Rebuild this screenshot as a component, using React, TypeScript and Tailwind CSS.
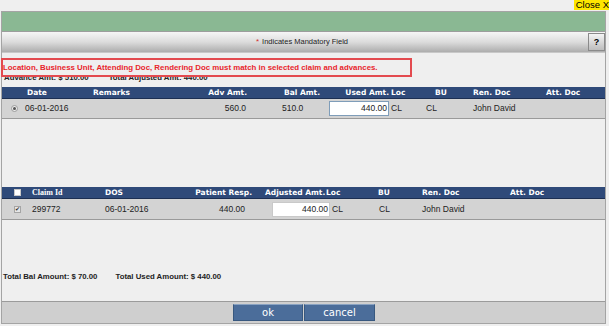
import React from 'react';

const hd = "font-['DejaVu_Sans',Verdana,sans-serif] font-bold text-[7.5px] text-white leading-none";
const td = "font-['Liberation_Sans',Arial,sans-serif] text-[8.5px] text-[#222] leading-none";

const AdvanceTable: React.FC = () => (
  <div className="w-full">
    {/* header */}
    <div className="grid grid-cols-[22px_68px_110px_46px_80px_63px_31px_50px_73px_1fr] items-center h-[12px] bg-[#2f4a79] border-b border-[#1c2f52]">
      <div />
      <div className={`${hd} pl-[3px]`}>Date</div>
      <div className={`${hd} pl-[1px]`}>Remarks</div>
      <div className={`${hd} text-right pr-[1px] whitespace-nowrap`}>Adv Amt.</div>
      <div className={`${hd} pl-[36px] whitespace-nowrap`}>Bal Amt.</div>
      <div className={`${hd} text-right pr-[2px] whitespace-nowrap`}>Used Amt.</div>
      <div className={`${hd}`}>Loc</div>
      <div className={`${hd} pl-[13px]`}>BU</div>
      <div className={`${hd} pl-[1px] whitespace-nowrap`}>Ren. Doc</div>
      <div className={`${hd} pl-[1px] whitespace-nowrap`}>Att. Doc</div>
    </div>
    {/* row */}
    <div className="grid grid-cols-[22px_68px_110px_46px_80px_63px_31px_50px_73px_1fr] items-center h-[20px] bg-[#d3d3d3] border-b border-[#9a9a9a]">
      <div className="flex justify-center pl-[2px]">
        <span className="w-[7px] h-[7px] rounded-full border border-[#9c9c9c] bg-[#ececec] flex items-center justify-center">
          <span className="w-[3px] h-[3px] rounded-full bg-[#555]" />
        </span>
      </div>
      <div className={`${td} pl-[1px]`}>06-01-2016</div>
      <div />
      <div className={`${td} text-right pr-[2px]`}>560.0</div>
      <div className={`${td} pl-[34px]`}>510.0</div>
      <div className="pl-[1px]">
        <div className={`${td} w-[60px] h-[15px] bg-white border border-[#7f9db9] flex items-center justify-end pr-[1px]`}>440.00</div>
      </div>
      <div className={`${td}`}>CL</div>
      <div className={`${td} pl-[4px]`}>CL</div>
      <div className={`${td} pl-[1px]`}>John David</div>
      <div />
    </div>
  </div>
);

const ClaimTable: React.FC = () => (
  <div className="w-full">
    <div className="grid grid-cols-[28px_72px_90px_60px_79px_41px_48px_88px_1fr] items-center h-[12px] bg-[#2f4a79] border-b border-[#1c2f52]">
      <div className="flex justify-center pl-[2px]">
        <span className="w-[7px] h-[7px] bg-white border border-[#c8c8c8]" />
      </div>
      <div className="font-['Liberation_Serif','Times_New_Roman',serif] font-bold text-[8px] text-white leading-none pl-[2px]">Claim Id</div>
      <div className={`${hd} pl-[3px]`}>DOS</div>
      <div className={`${hd} text-right whitespace-nowrap`}>Patient Resp.</div>
      <div className={`${hd} pl-[13px] whitespace-nowrap`}>Adjusted Amt.</div>
      <div className={`${hd} -ml-[5px]`}>Loc</div>
      <div className={`${hd} pl-[6px]`}>BU</div>
      <div className={`${hd} pl-[2px] whitespace-nowrap`}>Ren. Doc</div>
      <div className={`${hd} pl-[2px] whitespace-nowrap`}>Att. Doc</div>
    </div>
    <div className="grid grid-cols-[28px_72px_90px_60px_79px_41px_48px_88px_1fr] items-center h-[21px] bg-[#d3d3d3] border-b border-[#9a9a9a]">
      <div className="flex justify-center pl-[2px]">
        <span className="w-[7px] h-[7px] bg-[#e6e6e6] border border-[#a5a5a5] flex items-center justify-center text-[6px] leading-none text-[#333]">✔</span>
      </div>
      <div className={`${td} pl-[2px]`}>299772</div>
      <div className={`${td} pl-[3px]`}>06-01-2016</div>
      <div className={`${td} text-right pr-[7px]`}>440.00</div>
      <div className="pl-[20px]">
        <div className={`${td} w-[58px] h-[15px] bg-white border border-[#c9c9c9] flex items-center justify-end pr-[1px]`}>440.00</div>
      </div>
      <div className={`${td} pl-[1px]`}>CL</div>
      <div className={`${td} pl-[7px]`}>CL</div>
      <div className={`${td} pl-[2px]`}>John David</div>
      <div />
    </div>
  </div>
);

export default function App() {
  return (
    <div className="w-[609px] h-[326px] bg-[#efefef] flex flex-col overflow-hidden font-['Liberation_Sans',Arial,sans-serif]">
      {/* close strip */}
      <div className="h-[11px] flex justify-end">
        <span className="bg-[#ffe600] text-black text-[9.5px] leading-[10px] h-[10px] pl-[2px]">Close X</span>
      </div>

      <div className="ml-[1px] w-[605px] h-[313px] border border-[#a4a4a4] flex flex-col bg-[#efefef]">
        <div className="h-[20px] bg-[#8ab893] border-b border-[#9d9d9d]" />

        {/* mandatory header */}
        <div className="h-[21px] flex items-stretch bg-gradient-to-b from-[#f6f6f6] via-[#dcdcdc] to-[#adadad] border-b border-[#c8c8c8]">
          <div className="flex-1 flex items-center justify-center pl-[14px]">
            <span className="text-[#d52d2d] text-[8px] leading-none mr-[3px]">*</span>
            <span className="text-[7.5px] text-[#222] leading-none">Indicates Mandatory Field</span>
          </div>
          <div className="w-[17px] my-[1px] border border-[#8a8a8a] bg-gradient-to-b from-[#f4f4f4] to-[#bdbdbd] flex items-center justify-center">
            <span className="text-[9px] font-bold leading-none text-black">?</span>
          </div>
        </div>

        {/* validation message */}
        <div className="mt-[5px] -ml-[1px] w-[411px] h-[19px] border-2 border-[#e34a4f] bg-[#efefef] relative z-10 flex items-center">
          <span className="text-[#e8252c] font-bold text-[7.85px] leading-none whitespace-nowrap">
            Location, Business Unit, Attending Doc, Rendering Doc must match in selected claim and advances.
          </span>
        </div>

        <div className="-mt-[6px] h-[13px] flex items-center pl-[2px] gap-[20px] font-bold text-[7.8px] text-[#222] leading-none">
          <span>Advance Amt: $ 510.00</span>
          <span>Total Adjusted Amt: 440.00</span>
        </div>

        <div className="mt-[3px]">
          <AdvanceTable />
        </div>

        <div className="mt-[68px]">
          <ClaimTable />
        </div>

        <div className="mt-[52px] h-[10px] flex items-center pl-[1px] gap-[18px] font-bold text-[7.8px] text-[#222] leading-none">
          <span>Total Bal Amount: $ 70.00</span>
          <span>Total Used Amount: $ 440.00</span>
        </div>

        <div className="flex-1" />

        {/* footer */}
        <div className="h-[22px] bg-[#cfcfcf] border-t border-[#9b9b9b] flex items-center justify-center gap-[1px] pl-[1px]">
          <button className="w-[70px] h-[17px] bg-[#4b6d9a] border border-[#38587f] border-t-[#8aa3c2] text-white text-[10px] leading-none font-['DejaVu_Sans',Verdana,sans-serif]">ok</button>
          <button className="w-[71px] h-[17px] bg-[#4b6d9a] border border-[#38587f] border-t-[#8aa3c2] text-white text-[10px] leading-none font-['DejaVu_Sans',Verdana,sans-serif]">cancel</button>
        </div>
      </div>
    </div>
  );
}
